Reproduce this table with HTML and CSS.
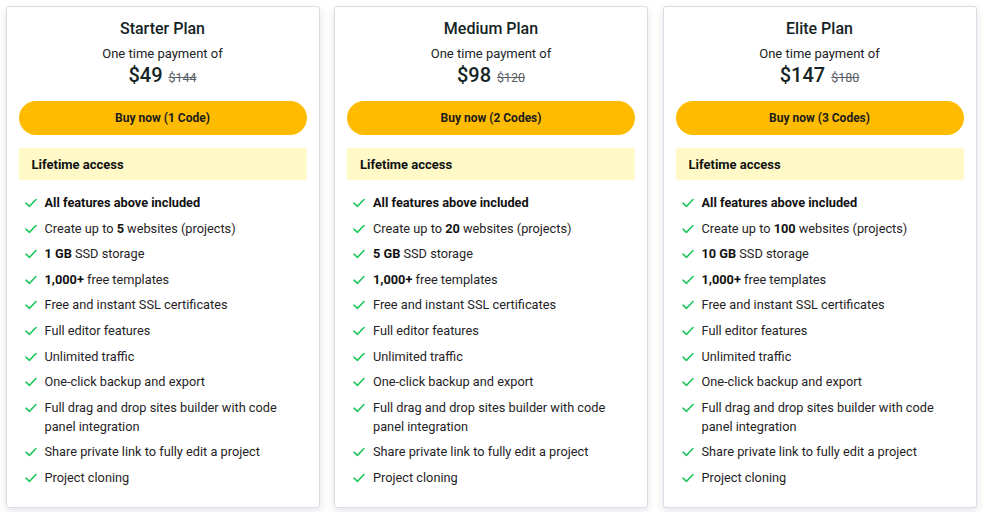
FILE: index.html
```
<!DOCTYPE html>
<html>
<head>
<meta charset="utf-8">
<link rel="stylesheet" href="styles.css">
</head>
<body>
<div class="plans">
  <div class="card">
    <h2 class="title">Starter Plan</h2>
    <div class="sub">One time payment of</div>
    <div class="price"><span class="now">$49</span><s class="old">$144</s></div>
    <button class="buy">Buy now (1 Code)</button>
    <div class="life">Lifetime access</div>
    <ul class="feats">
      <li><svg viewBox="0 0 12 10"><path d="M1 5.2l3.4 3.2L11 1.5"/></svg><span><b>All features above included</b></span></li>
      <li><svg viewBox="0 0 12 10"><path d="M1 5.2l3.4 3.2L11 1.5"/></svg><span>Create up to <b>5</b> websites (projects)</span></li>
      <li><svg viewBox="0 0 12 10"><path d="M1 5.2l3.4 3.2L11 1.5"/></svg><span><b>1 GB</b> SSD storage</span></li>
      <li><svg viewBox="0 0 12 10"><path d="M1 5.2l3.4 3.2L11 1.5"/></svg><span><b>1,000+</b> free templates</span></li>
      <li><svg viewBox="0 0 12 10"><path d="M1 5.2l3.4 3.2L11 1.5"/></svg><span>Free and instant SSL certificates</span></li>
      <li><svg viewBox="0 0 12 10"><path d="M1 5.2l3.4 3.2L11 1.5"/></svg><span>Full editor features</span></li>
      <li><svg viewBox="0 0 12 10"><path d="M1 5.2l3.4 3.2L11 1.5"/></svg><span>Unlimited traffic</span></li>
      <li><svg viewBox="0 0 12 10"><path d="M1 5.2l3.4 3.2L11 1.5"/></svg><span>One-click backup and export</span></li>
      <li><svg viewBox="0 0 12 10"><path d="M1 5.2l3.4 3.2L11 1.5"/></svg><span>Full drag and drop sites builder with code panel integration</span></li>
      <li><svg viewBox="0 0 12 10"><path d="M1 5.2l3.4 3.2L11 1.5"/></svg><span>Share private link to fully edit a project</span></li>
      <li><svg viewBox="0 0 12 10"><path d="M1 5.2l3.4 3.2L11 1.5"/></svg><span>Project cloning</span></li>
    </ul>
  </div>
  <div class="card">
    <h2 class="title">Medium Plan</h2>
    <div class="sub">One time payment of</div>
    <div class="price"><span class="now">$98</span><s class="old">$120</s></div>
    <button class="buy">Buy now (2 Codes)</button>
    <div class="life">Lifetime access</div>
    <ul class="feats">
      <li><svg viewBox="0 0 12 10"><path d="M1 5.2l3.4 3.2L11 1.5"/></svg><span><b>All features above included</b></span></li>
      <li><svg viewBox="0 0 12 10"><path d="M1 5.2l3.4 3.2L11 1.5"/></svg><span>Create up to <b>20</b> websites (projects)</span></li>
      <li><svg viewBox="0 0 12 10"><path d="M1 5.2l3.4 3.2L11 1.5"/></svg><span><b>5 GB</b> SSD storage</span></li>
      <li><svg viewBox="0 0 12 10"><path d="M1 5.2l3.4 3.2L11 1.5"/></svg><span><b>1,000+</b> free templates</span></li>
      <li><svg viewBox="0 0 12 10"><path d="M1 5.2l3.4 3.2L11 1.5"/></svg><span>Free and instant SSL certificates</span></li>
      <li><svg viewBox="0 0 12 10"><path d="M1 5.2l3.4 3.2L11 1.5"/></svg><span>Full editor features</span></li>
      <li><svg viewBox="0 0 12 10"><path d="M1 5.2l3.4 3.2L11 1.5"/></svg><span>Unlimited traffic</span></li>
      <li><svg viewBox="0 0 12 10"><path d="M1 5.2l3.4 3.2L11 1.5"/></svg><span>One-click backup and export</span></li>
      <li><svg viewBox="0 0 12 10"><path d="M1 5.2l3.4 3.2L11 1.5"/></svg><span>Full drag and drop sites builder with code panel integration</span></li>
      <li><svg viewBox="0 0 12 10"><path d="M1 5.2l3.4 3.2L11 1.5"/></svg><span>Share private link to fully edit a project</span></li>
      <li><svg viewBox="0 0 12 10"><path d="M1 5.2l3.4 3.2L11 1.5"/></svg><span>Project cloning</span></li>
    </ul>
  </div>
  <div class="card">
    <h2 class="title">Elite Plan</h2>
    <div class="sub">One time payment of</div>
    <div class="price"><span class="now">$147</span><s class="old">$180</s></div>
    <button class="buy">Buy now (3 Codes)</button>
    <div class="life">Lifetime access</div>
    <ul class="feats">
      <li><svg viewBox="0 0 12 10"><path d="M1 5.2l3.4 3.2L11 1.5"/></svg><span><b>All features above included</b></span></li>
      <li><svg viewBox="0 0 12 10"><path d="M1 5.2l3.4 3.2L11 1.5"/></svg><span>Create up to <b>100</b> websites (projects)</span></li>
      <li><svg viewBox="0 0 12 10"><path d="M1 5.2l3.4 3.2L11 1.5"/></svg><span><b>10 GB</b> SSD storage</span></li>
      <li><svg viewBox="0 0 12 10"><path d="M1 5.2l3.4 3.2L11 1.5"/></svg><span><b>1,000+</b> free templates</span></li>
      <li><svg viewBox="0 0 12 10"><path d="M1 5.2l3.4 3.2L11 1.5"/></svg><span>Free and instant SSL certificates</span></li>
      <li><svg viewBox="0 0 12 10"><path d="M1 5.2l3.4 3.2L11 1.5"/></svg><span>Full editor features</span></li>
      <li><svg viewBox="0 0 12 10"><path d="M1 5.2l3.4 3.2L11 1.5"/></svg><span>Unlimited traffic</span></li>
      <li><svg viewBox="0 0 12 10"><path d="M1 5.2l3.4 3.2L11 1.5"/></svg><span>One-click backup and export</span></li>
      <li><svg viewBox="0 0 12 10"><path d="M1 5.2l3.4 3.2L11 1.5"/></svg><span>Full drag and drop sites builder with code panel integration</span></li>
      <li><svg viewBox="0 0 12 10"><path d="M1 5.2l3.4 3.2L11 1.5"/></svg><span>Share private link to fully edit a project</span></li>
      <li><svg viewBox="0 0 12 10"><path d="M1 5.2l3.4 3.2L11 1.5"/></svg><span>Project cloning</span></li>
    </ul>
  </div>
</div>
</body>
</html>
```
FILE: styles.css
```
html, body {
  margin: 0;
  padding: 0;
  background: #ffffff;
}
body {
  font-family: Roboto, "Liberation Sans", sans-serif;
  color: #1f2326;
}
.plans {
  display: flex;
  gap: 14.5px;
  padding: 6px 8px 6px 5.5px;
  align-items: stretch;
}
.card {
  width: 314px;
  box-sizing: border-box;
  background: #fff;
  border: 1px solid #dcdce6;
  border-radius: 3px;
  box-shadow: 0 3px 8px rgba(40, 40, 80, 0.12);
  padding: 12px 12px 20px;
  display: flex;
  flex-direction: column;
  align-items: stretch;
}
.title {
  margin: 0;
  text-align: center;
  font-size: 16px;
  font-weight: 500;
  line-height: 20px;
  color: #142424;
}
.sub {
  margin-top: 5px;
  text-align: center;
  font-size: 13px;
  line-height: 19px;
  color: #1c2326;
}
.price {
  display: flex;
  justify-content: center;
  align-items: baseline;
  gap: 6px;
  line-height: 24px;
}
.now {
  font-size: 20px;
  font-weight: 500;
  color: #142424;
}
.old {
  font-size: 12.5px;
  color: #5a6066;
}
.buy {
  margin-top: 11px;
  height: 34px;
  border: none;
  border-radius: 17px;
  background: #ffbb00;
  font-family: Roboto, "Liberation Sans", sans-serif;
  font-weight: 700;
  font-size: 12px;
  color: #1c1c1c;
  padding: 0;
}
.life {
  margin-top: 13px;
  height: 32px;
  display: flex;
  align-items: center;
  padding-left: 13px;
  background: #fef9c7;
  border-radius: 2px;
  font-weight: 700;
  font-size: 13px;
  color: #111;
}
.feats {
  list-style: none;
  margin: 13px 0 0;
  padding: 0 0 0 6px;
  display: flex;
  flex-direction: column;
  gap: 6.6px;
}
.feats li {
  display: flex;
  align-items: flex-start;
  gap: 8px;
  font-size: 12.75px;
  line-height: 19px;
  color: #1f2326;
}
.feats li b {
  font-weight: 700;
  color: #111;
}
.feats svg {
  flex: none;
  width: 12px;
  height: 10px;
  margin-top: 5px;
  fill: none;
  stroke: #22c55e;
  stroke-width: 1.6;
  stroke-linecap: round;
  stroke-linejoin: round;
}
.feats span {
  padding-right: 10px;
}
```
